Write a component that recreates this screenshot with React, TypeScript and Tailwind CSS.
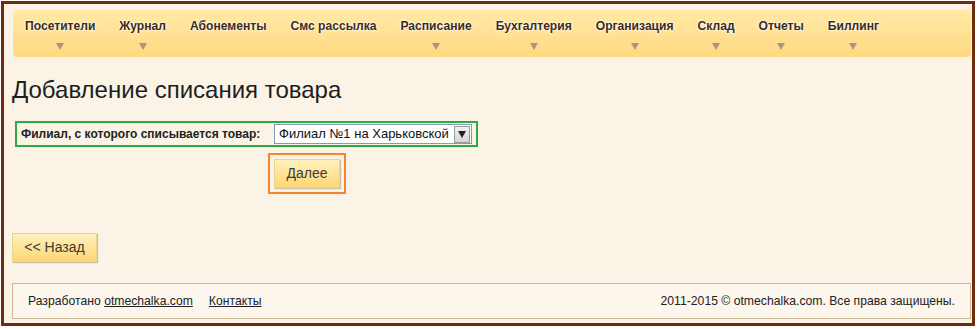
const menu = [
  { title: 'Посетители', arrow: true },
  { title: 'Журнал', arrow: true },
  { title: 'Абонементы', arrow: false },
  { title: 'Смс рассылка', arrow: false },
  { title: 'Расписание', arrow: true },
  { title: 'Бухгалтерия', arrow: true },
  { title: 'Организация', arrow: true },
  { title: 'Склад', arrow: true },
  { title: 'Отчеты', arrow: true },
  { title: 'Биллинг', arrow: true },
];

const Arrow = ({ color = '#a8977c' }: { color?: string }) => (
  <svg width="8" height="7" viewBox="0 0 8 7">
    <path d="M0 0 L8 0 L4 7 Z" fill={color} />
  </svg>
);

const App = () => {
  return (
    <div className="bg-white p-px" style={{ fontFamily: '"Liberation Sans", Arial, sans-serif' }}>
      <div className="w-[974px] h-[325px] border-[3px] border-[#6d2b0f] bg-[#faf3e6] pl-2 pr-px pt-[6px]">
        {/* top menu */}
        <div className="ml-px h-[47px] rounded-[4px] bg-gradient-to-b from-[#ffeaa6] to-[#ffd980] flex">
          {menu.map(item => (
            <div key={item.title} className="flex flex-col items-center px-3 pt-[9px]">
              <span className="text-[12.1px] leading-[14px] font-bold text-[#3b2b1b] whitespace-nowrap [text-shadow:0_0_3px_#fff,0_0_2px_#fff]">
                {item.title}
              </span>
              {item.arrow && (
                <div className="mt-[10px] flex">
                  <Arrow />
                </div>
              )}
            </div>
          ))}
        </div>

        <h1 className="mt-[19px] text-[24px] leading-[28px] text-[#1e1e1e]">Добавление списания товара</h1>

        <div className="mt-[17px] ml-[3px] w-[463px] h-[26px] border-2 border-[#2fa84a] flex items-center pl-1">
          <span className="text-[12px] font-bold text-[#222] w-[253px]">Филиал, с которого списывается товар:</span>
          <div className="w-[198px] h-[20px] border border-[#7f9db9] bg-white flex items-center justify-between pl-1 pr-px">
            <span className="text-[13px] text-[#111] whitespace-nowrap">Филиал №1 на Харьковской</span>
            <div className="w-[16px] h-[17px] border border-[#9a9a9a] bg-gradient-to-b from-[#f4f4f4] to-[#d4d4d4] flex items-center justify-center">
              <Arrow color="#222" />
            </div>
          </div>
        </div>

        <div className="mt-[6px] ml-[256px] w-[78px] h-[41px] border-2 border-[#f4862f] p-1">
          <div className="w-full h-full border border-[#ecd58c] bg-gradient-to-b from-[#fff1bd] to-[#ffd773] shadow-[1px_1px_1px_#c9bfae] flex items-center justify-center text-[14px] text-[#3a3a3a]">
            Далее
          </div>
        </div>

        <div className="mt-[39px] w-[85px] h-[29px] border border-[#ecd58c] bg-gradient-to-b from-[#fff1bd] to-[#ffd773] shadow-[1px_1px_1px_#c9bfae] flex items-center justify-center text-[14px] text-[#3a3a3a]">
          &lt;&lt; Назад
        </div>

        <div className="mt-[21px] h-[36px] border border-[#cdb896] bg-[#fcf6ed] flex items-center justify-between pl-[15px] pr-[15px] text-[12.2px] text-[#222]">
          <div className="flex">
            <span>
              Разработано <span className="underline">otmechalka.com</span>
            </span>
            <span className="ml-[16px] underline">Контакты</span>
          </div>
          <span>2011-2015 © otmechalka.com. Все права защищены.</span>
        </div>
      </div>
    </div>
  );
};

export default App;
